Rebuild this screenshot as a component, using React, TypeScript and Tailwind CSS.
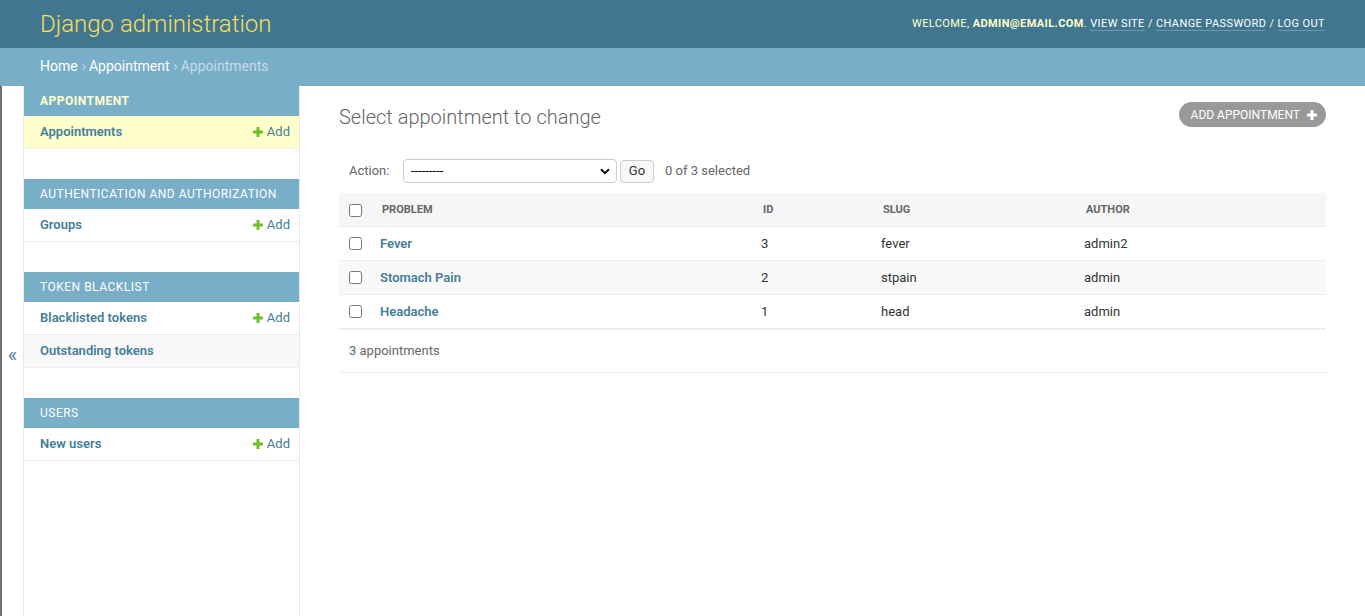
import React from "react"

const font = { fontFamily: "Roboto, 'Liberation Sans', Arial, sans-serif" }

function PlusIcon({ className }: { className?: string }) {
  return (
    <svg viewBox="0 0 10 10" className={className} aria-hidden="true">
      <rect x="3.5" y="0" width="3" height="10" rx="0.6" fill="currentColor" />
      <rect x="0" y="3.5" width="10" height="3" rx="0.6" fill="currentColor" />
    </svg>
  )
}

type NavModel = { name: string; add?: boolean; current?: boolean; shaded?: boolean }
type NavApp = { title: string; current?: boolean; models: NavModel[] }

const apps: NavApp[] = [
  { title: "Appointment", current: true, models: [{ name: "Appointments", add: true, current: true }] },
  { title: "Authentication and Authorization", models: [{ name: "Groups", add: true }] },
  {
    title: "Token Blacklist",
    models: [
      { name: "Blacklisted tokens", add: true },
      { name: "Outstanding tokens", shaded: true },
    ],
  },
  { title: "Users", models: [{ name: "New users", add: true }] },
]

const rows = [
  { problem: "Fever", id: 3, slug: "fever", author: "admin2" },
  { problem: "Stomach Pain", id: 2, slug: "stpain", author: "admin" },
  { problem: "Headache", id: 1, slug: "head", author: "admin" },
]

const cols = "grid grid-cols-[33px_381px_120px_203px_1fr] items-center"

function Sidebar() {
  return (
    <nav className="w-[276px] shrink-0 border-r border-[#e8e8e8]">
      {apps.map((app) => (
        <div key={app.title} className="mb-[30px]">
          <div
            className={
              "h-[30px] flex items-center pl-4 bg-[#79aec8] text-[12px] uppercase tracking-[0.5px] " +
              (app.current ? "text-[#ffffcc] font-bold" : "text-white")
            }
          >
            {app.title}
          </div>
          {app.models.map((m) => (
            <div
              key={m.name}
              className={
                "h-[33px] flex items-center justify-between pl-4 pr-[9px] border-b border-[#eeeeee] text-[13px] " +
                (m.current ? "bg-[#ffffcc]" : m.shaded ? "bg-[#f8f8f8]" : "bg-white")
              }
            >
              <a className="font-semibold text-[#447e9b]">{m.name}</a>
              {m.add && (
                <a className="flex items-center gap-1 text-[#447e9b]">
                  <PlusIcon className="w-[10px] h-[10px] text-[#70bf2b]" />
                  Add
                </a>
              )}
            </div>
          ))}
        </div>
      ))}
    </nav>
  )
}

export default function App() {
  return (
    <div style={font} className="min-h-screen bg-white text-[#333] text-[14px]">
      <header className="h-12 bg-[#417690] px-10 flex items-center justify-between">
        <div className="text-[24px] font-light text-[#f5dd5d]">Django administration</div>
        <div className="text-[11px] uppercase tracking-[0.4px] text-[#ffffcc] pt-[1px]">
          Welcome, <strong className="font-bold">admin@email.com</strong>.{" "}
          <a className="border-b border-white/25 text-white">View site</a> /{" "}
          <a className="border-b border-white/25 text-white">Change password</a> /{" "}
          <a className="border-b border-white/25 text-white">Log out</a>
        </div>
      </header>

      <div className="h-[38px] bg-[#79aec8] px-10 pb-[1px] flex items-center text-[14px] text-[#c4dce8]">
        <a className="text-white">Home</a>
        <span className="ml-[4px] mr-[3px]">›</span>
        <a className="text-white">Appointment</a>
        <span className="ml-[4px] mr-[3px]">›</span>
        <span>Appointments</span>
      </div>

      <div className="flex h-[530px]">
        <div className="w-[24px] shrink-0 border-l-2 border-[#6f6f6f] border-r border-r-[#e8e8e8] flex items-center justify-center text-[20px] text-[#447e9b] leading-none pt-[8px]">
          «
        </div>

        <Sidebar />

        <main className="flex-1 pl-[39px] pr-[39px] pt-4">
          <div className="flex items-start justify-between">
            <h1 className="mt-[3px] text-[20px] leading-[24px] font-light text-[#666]">Select appointment to change</h1>
            <a className="h-[25px] rounded-full bg-[#999] pl-3 pr-[9px] flex items-center gap-[7px] text-[12px] uppercase text-white">
              Add appointment
              <PlusIcon className="w-[10px] h-[10px]" />
            </a>
          </div>

          <div className="mt-[30px] h-[24px] flex items-center text-[13px] text-[#666]">
            <span className="w-[64px] shrink-0 pl-[10px]">Action:</span>
            <div className="relative w-[214px] h-[24px]">
              <select className="w-full h-full appearance-none rounded-[4px] border border-[#ccc] bg-white pl-[7px] text-[13px] text-[#000]">
                <option>---------</option>
              </select>
              <svg viewBox="0 0 10 7" className="absolute right-[7px] top-[9px] w-[10px] h-[7px] pointer-events-none">
                <path d="M1 1.2 L5 5.2 L9 1.2" fill="none" stroke="#111" strokeWidth="2" />
              </svg>
            </div>
            <button className="ml-[3px] h-[23px] w-[34px] rounded-[4px] border border-[#ccc] bg-[#f8f8f8] text-[13px] text-[#333]">
              Go
            </button>
            <span className="ml-[11px]">0 of 3 selected</span>
          </div>

          <div className="mt-[10px]">
            <div className={cols + " h-[34px] pt-[1px] bg-[#f6f6f6] border-b border-[#eeeeee] text-[11px] font-bold uppercase text-[#666]"}>
              <div className="pl-[10px] flex">
                <input type="checkbox" className="w-[13px] h-[13px]" />
              </div>
              <div className="pl-[10px]">Problem</div>
              <div className="pl-[10px]">Id</div>
              <div className="pl-[10px]">Slug</div>
              <div className="pl-[10px]">Author</div>
            </div>
            {rows.map((r, i) => (
              <div
                key={r.id}
                className={cols + " h-[34px] border-b border-[#eeeeee] text-[13px] text-[#333] " + (i % 2 === 1 ? "bg-[#f9f9f9]" : "bg-white")}
              >
                <div className="pl-[10px] flex">
                  <input type="checkbox" className="w-[13px] h-[13px]" />
                </div>
                <div className="pl-2">
                  <a className="font-semibold text-[#447e9b]">{r.problem}</a>
                </div>
                <div className="pl-2">{r.id}</div>
                <div className="pl-2">{r.slug}</div>
                <div className="pl-2">{r.author}</div>
              </div>
            ))}
            <div className="h-[44px] border-t border-b border-[#eeeeee] flex items-center pl-[10px] text-[13px] text-[#666]">
              3 appointments
            </div>
          </div>
        </main>
      </div>
    </div>
  )
}
